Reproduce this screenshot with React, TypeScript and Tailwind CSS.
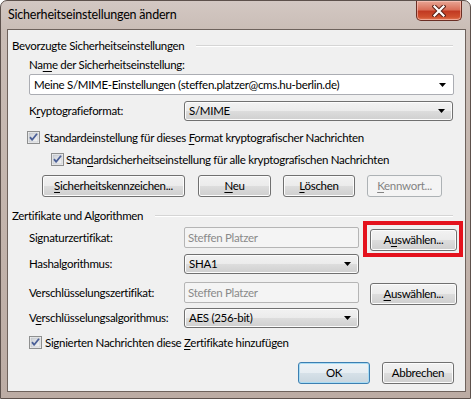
import React from "react";

const btnNormal =
  "border-[#707070] bg-[linear-gradient(#f2f2f2_0%,#ebebeb_50%,#dddddd_50%,#cfcfcf_100%)] shadow-[inset_0_0_0_1px_#fcfcfc] text-black";

function U({ children }: { children: React.ReactNode }) {
  return <span className="underline underline-offset-[2px] decoration-1">{children}</span>;
}

function WinButton({
  children,
  className = "",
  disabled,
  isDefault,
}: {
  children: React.ReactNode;
  className?: string;
  disabled?: boolean;
  isDefault?: boolean;
}) {
  let look = btnNormal;
  if (disabled) look = "border-[#adb2b5] bg-[#f4f4f4] text-[#838383]";
  if (isDefault)
    look =
      "border-[#3c7fb1] bg-[linear-gradient(#eef3f6_0%,#e6edf2_50%,#d6e1e8_50%,#c9d6df_100%)] shadow-[inset_0_0_0_1px_#a9dcf4] text-black";
  return (
    <div
      className={`h-[22px] shrink-0 rounded-[3px] border flex items-center justify-center ${look} ${className}`}
    >
      {children}
    </div>
  );
}

function Arrow() {
  return (
    <svg width="7" height="4" viewBox="0 0 7 4" className="shrink-0">
      <path d="M0 0h7L3.5 4z" fill="#000" />
    </svg>
  );
}

function DropList({ value, className = "" }: { value: string; className?: string }) {
  return (
    <div
      className={`h-[20px] shrink-0 rounded-[3px] border flex items-center pl-[4px] pr-[7px] ${btnNormal} ${className}`}
    >
      <span className="flex-1">{value}</span>
      <Arrow />
    </div>
  );
}

function TextBox({ value, className = "" }: { value: string; className?: string }) {
  return (
    <div
      className={`h-[21px] shrink-0 rounded-[2px] border border-[#b5b5b5] bg-[#f4f4f4] flex items-center pl-[3px] text-[#8a8a8a] ${className}`}
    >
      {value}
    </div>
  );
}

function CheckBox() {
  return (
    <svg width="13" height="13" viewBox="0 0 13 13" className="shrink-0">
      <defs>
        <linearGradient id="cbg" x1="0" y1="0" x2="1" y2="1">
          <stop offset="0" stopColor="#cbcfd5" />
          <stop offset="1" stopColor="#f6f6f6" />
        </linearGradient>
      </defs>
      <rect x="0.5" y="0.5" width="12" height="12" fill="#f4f4f4" stroke="#8e8f8f" />
      <rect x="2" y="2" width="9" height="9" fill="url(#cbg)" stroke="#b7bcc3" strokeWidth="0.6" />
      <path d="M3 6.2l2.2 2.6L10 2.8" fill="none" stroke="#4a5f97" strokeWidth="1.8" strokeLinejoin="round" />
    </svg>
  );
}

function GroupHeader({ children }: { children: React.ReactNode }) {
  return (
    <div className="h-[15px] flex items-center pl-[4px] pr-[12px]">
      <span>{children}</span>
      <div className="flex-1 ml-[12px] border-t border-[#d5d5d5] border-b border-b-white" />
    </div>
  );
}

function CloseButton() {
  return (
    <div className="absolute top-0 right-[8px] w-[46px] h-[20px] rounded-b-[5px] border border-t-0 border-[#6b2e24] bg-[linear-gradient(#e8a695_0%,#d9705a_45%,#c23a22_55%,#d0512f_85%,#e37d5c_100%)] shadow-[inset_0_0_0_1px_rgba(255,210,200,0.55)] flex items-center justify-center">
      <svg width="14" height="12" viewBox="0 0 14 12">
        <path d="M2.5 1.5L11.5 10.5M11.5 1.5L2.5 10.5" stroke="#5a2219" strokeWidth="4.2" strokeLinecap="square" />
        <path d="M2.5 1.5L11.5 10.5M11.5 1.5L2.5 10.5" stroke="#ffffff" strokeWidth="2.2" strokeLinecap="square" />
      </svg>
    </div>
  );
}

export default function App() {
  return (
    <div className="w-[471px] h-[399px] overflow-hidden relative rounded-t-[7px] border border-[#5d514c] bg-[linear-gradient(180deg,#d3c8c3_0%,#c9bcb5_8%,#c2b3ab_60%,#bcaca4_100%)] font-['Lato','Liberation_Sans',sans-serif] text-black">
      <div className="h-[28px] flex items-center pl-[7px] text-[12.5px] tracking-[-0.2px] text-black">
        Sicherheitseinstellungen ändern
      </div>
      <CloseButton />

      <div className="ml-[6px] w-[459px] h-[363px] border border-[#6e625c] bg-[#f0f0f0] flex flex-col text-[11.5px] tracking-[-0.3px]">
        <div className="mt-[8px]">
          <GroupHeader>Bevorzugte Sicherheitseinstellungen</GroupHeader>
        </div>

        <div className="mt-[4px] h-[15px] flex items-center pl-[21px]">
          <span>
            Na<U>m</U>e der Sicherheitseinstellung:
          </span>
        </div>

        <div className="mt-[2px] pl-[21px]">
          <div className="w-[425px] h-[21px] rounded-[2px] border border-[#abadb3] bg-white flex items-center pl-[4px] pr-[7px]">
            <span className="flex-1">Meine S/MIME-Einstellungen (steffen.platzer@cms.hu-berlin.de)</span>
            <Arrow />
          </div>
        </div>

        <div className="mt-[6px] h-[20px] flex items-center pl-[21px]">
          <span className="w-[155px]">
            K<U>r</U>yptografieformat:
          </span>
          <DropList value="S/MIME" className="w-[269px]" />
        </div>

        <div className="mt-[10px] h-[13px] flex items-center pl-[19px] gap-[4px]">
          <CheckBox />
          <span>
            Standardeinstellung für dieses <U>F</U>ormat kryptografischer Nachrichten
          </span>
        </div>

        <div className="mt-[9px] h-[13px] flex items-center pl-[43px] gap-[2px]">
          <CheckBox />
          <span>
            Stan<U>d</U>ardsicherheitseinstellung für alle kryptografischen Nachrichten
          </span>
        </div>

        <div className="mt-[9px] flex items-center pl-[34px]">
          <WinButton className="w-[143px]">
            <span>
              <U>S</U>icherheitskennzeichen...
            </span>
          </WinButton>
          <WinButton className="w-[73px] ml-[13px]">
            <span>
              <U>N</U>eu
            </span>
          </WinButton>
          <WinButton className="w-[72px] ml-[12px]">
            <span>
              <U>L</U>öschen
            </span>
          </WinButton>
          <WinButton disabled className="w-[75px] ml-[12px]">
            <span>
              <U>K</U>ennwort...
            </span>
          </WinButton>
        </div>

        <div className="mt-[11px]">
          <GroupHeader>Zertifikate und Algorithmen</GroupHeader>
        </div>

        <div className="mt-[4px] h-[23px] flex items-start pl-[21px]">
          <span className="w-[155px] h-[21px] flex items-center">Signaturzertifikat:</span>
          <TextBox value="Steffen Platzer" className="w-[175px]" />
          <div className="relative ml-[11px] mt-[2px]">
            <WinButton className="w-[87px]">
              <span>
                A<U>u</U>swählen...
              </span>
            </WinButton>
            <div className="absolute -left-[7px] -top-[8px] -right-[6px] -bottom-[6px] border-[4px] border-[#e4121d]" />
          </div>
        </div>

        <div className="mt-[4px] h-[20px] flex items-center pl-[21px]">
          <span className="w-[155px]">Hashalgorithmus:</span>
          <DropList value="SHA1" className="w-[175px]" />
        </div>

        <div className="mt-[8px] h-[23px] flex items-start pl-[21px]">
          <span className="w-[155px] h-[21px] flex items-center">Verschlüsselungszertifikat:</span>
          <TextBox value="Steffen Platzer" className="w-[175px]" />
          <WinButton className="w-[87px] ml-[11px] mt-[1px]">
            <span>
              <U>A</U>uswählen...
            </span>
          </WinButton>
        </div>

        <div className="mt-[3px] h-[20px] flex items-center pl-[21px]">
          <span className="w-[155px]">
            V<U>e</U>rschlüsselungsalgorithmus:
          </span>
          <DropList value="AES (256-bit)" className="w-[175px]" />
        </div>

        <div className="mt-[8px] h-[13px] flex items-center pl-[21px] gap-[3px]">
          <CheckBox />
          <span>
            Signierten Nachrichten diese <U>Z</U>ertifikate hinzufügen
          </span>
        </div>

        <div className="mt-[13px] flex items-center justify-end pr-[11px]">
          <WinButton isDefault className="w-[72px]">
            OK
          </WinButton>
          <WinButton className="w-[72px] ml-[12px]">Abbrechen</WinButton>
        </div>
      </div>
    </div>
  );
}
